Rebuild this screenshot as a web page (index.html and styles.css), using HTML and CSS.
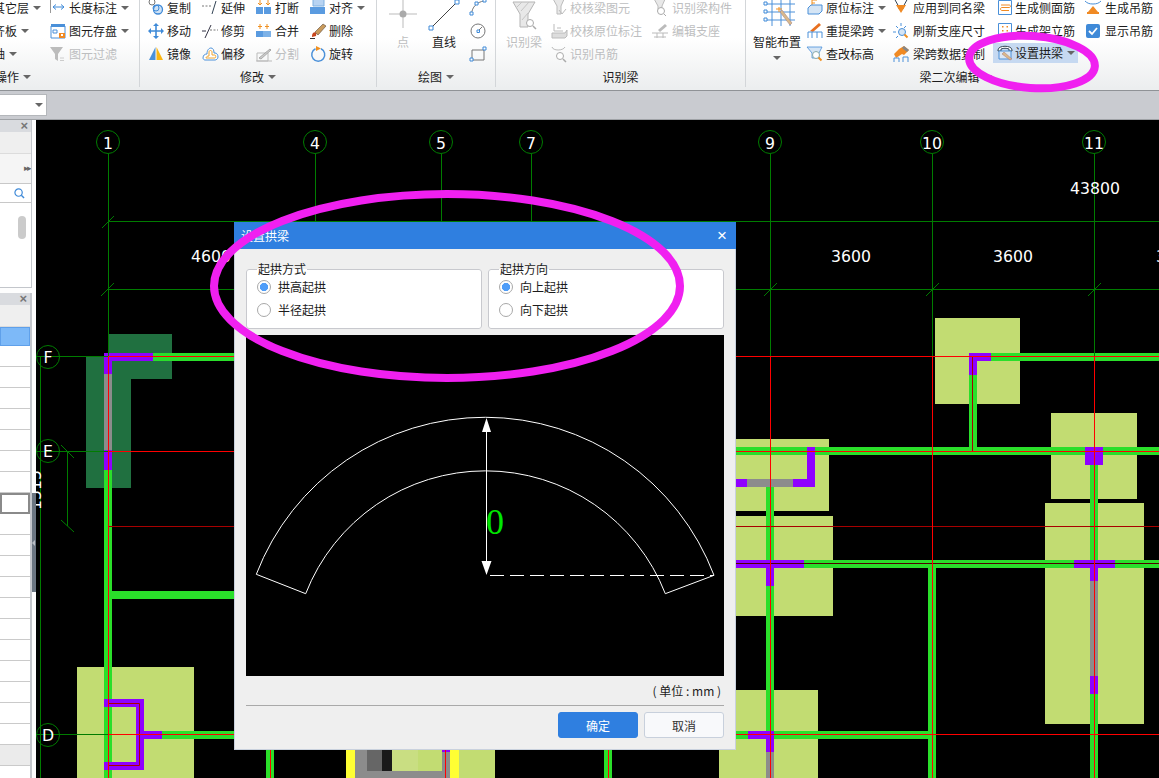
FILE: index.html
```html
<!DOCTYPE html>
<html lang="zh">
<head>
<meta charset="utf-8">
<title>设置拱梁</title>
<link rel="stylesheet" href="styles.css">
</head>
<body>
<div class="app">
  <header class="ribbon">
    <section class="group g1">
      <div class="tools">
        <div class="col col-a">
          <div class="tool pr9"><span>其它层</span><i class="caret"></i></div>
          <div class="tool pr21"><span>平齐板</span><i class="caret"></i></div>
          <div class="tool pr33"><span>轴</span><i class="caret"></i></div>
        </div>
        <div class="col">
          <div class="tool"><svg class="ico" viewBox="0 0 16 16"><path d="M.5 -2V13" stroke="#999" fill="none"/><path d="M3 7h11M3 7l3-2.500M3 7l3 2.500M14 7l-3-2.500M14 7l-3 2.500" stroke="#3f8ad8" fill="none"/></svg><span>长度标注</span><i class="caret"></i></div>
          <div class="tool"><svg class="ico" viewBox="0 0 16 16"><path d="M1 3h14v12H1z" fill="#fff" stroke="#4a90d9"/><path d="M1 1h14v3H1z" fill="#4a90d9"/><path d="M3 7h4v3H3z" fill="none" stroke="#4a90d9"/><path d="M9 10h6v5H9z" fill="#f08a24"/><path d="M11 11h2v2h-2z" fill="#fff"/></svg><span>图元存盘</span><i class="caret"></i></div>
          <div class="tool off"><svg class="ico" viewBox="0 0 16 16"><path d="M0 1h13L8 8v7L5 13V8z" fill="#bcbcbc"/><path d="M10 12h4M10 14.500h4" stroke="#ccc" fill="none"/></svg><span>图元过滤</span></div>
        </div>
      </div>
      <div class="label label-left"><span>操作</span><i class="caret"></i></div>
    </section>

    <section class="group g2">
      <div class="tools">
        <div class="col">
          <div class="tool"><svg class="ico" viewBox="0 0 16 16"><circle cx="4" cy="2" r="3" fill="#fff" stroke="#777"/><circle cx="10" cy="9.500" r="4.500" fill="#cfe2f5" stroke="#3f8ad8" stroke-width="1.300"/><circle cx="8" cy="8" r="3" fill="none" stroke="#3f8ad8"/></svg><span>复制</span></div>
          <div class="tool"><svg class="ico" viewBox="0 0 16 16"><path d="M8 2v12M2 8h12" stroke="#3f8ad8" stroke-width="1.600"/><path d="M8 0l3 3H5zM8 16l3-3H5zM0 8l3-3v6zM16 8l-3-3v6z" fill="#3f8ad8"/></svg><span>移动</span></div>
          <div class="tool"><svg class="ico" viewBox="0 0 16 16"><path d="M7.500 1L1 14h6.500z" fill="#4a90d9"/><path d="M8.500 1v13H15z" fill="#fbb512"/></svg><span>镜像</span></div>
        </div>
        <div class="col">
          <div class="tool"><svg class="ico" viewBox="0 0 16 16"><path d="M0 6h10" stroke="#777" stroke-dasharray="2 1.500" fill="none"/><path d="M14 1l-4 13" stroke="#345" fill="none"/></svg><span>延伸</span></div>
          <div class="tool"><svg class="ico" viewBox="0 0 16 16"><path d="M9 2L3 15" stroke="#334" fill="none"/><path d="M0 8h4" stroke="#334" fill="none"/><path d="M8 7h8" stroke="#777" stroke-dasharray="2 1.500" fill="none"/></svg><span>修剪</span></div>
          <div class="tool"><svg class="ico" viewBox="0 0 16 16"><path d="M1 12c0-3 2-4 4-4 0-4 2-6 4-6s3 2 3 5h1c2 0 3 2 3 4s-2 3-3 3H3c-1 0-2-1-2-2z" fill="#fff" stroke="#4a90d9"/><path d="M4 12c0-1 1-2 3-2V6c0-2 3-2 3 0v3h3c1 0 1 3 0 3z" fill="none" stroke="#f0a530"/></svg><span>偏移</span></div>
        </div>
        <div class="col">
          <div class="tool"><svg class="ico" viewBox="0 0 16 16"><path d="M0 7h7v7H0zM8 7h7v7H8z" fill="#5a9be0"/><path d="M4 0v5M2 3l2 2 2-2M12 0v5M10 3l2 2 2-2" stroke="#f09020" fill="none"/></svg><span>打断</span></div>
          <div class="tool"><svg class="ico" viewBox="0 0 16 16"><path d="M0 8h7v6H0z" fill="#5a9be0"/><path d="M7 8h8v6H7z" fill="#7db2e8"/><path d="M4 1v5M2 3.500h4M11 1v5M9 3.500h4" stroke="#f09020" fill="none"/></svg><span>合并</span></div>
          <div class="tool off"><svg class="ico" viewBox="0 0 16 16"><path d="M1 7h11v8H1z" fill="none" stroke="#bbb"/><path d="M3 12L14 3l1 1L5 13z" fill="#ccc" stroke="#aaa"/><path d="M0 15h16" stroke="#bbb"/></svg><span>分割</span></div>
        </div>
        <div class="col">
          <div class="tool"><svg class="ico" viewBox="0 0 16 16"><path d="M3 -2h11v8H3z" fill="#b7d3f2" stroke="#7fb0e0"/><path d="M0 7h15v7H0z" fill="#5a9be0"/></svg><span>对齐</span><i class="caret"></i></div>
          <div class="tool"><svg class="ico" viewBox="0 0 16 16"><path d="M5 9L13 1l3 2-8 9z" fill="#c99a5b" stroke="#5a4a3a" stroke-width=".6"/><path d="M3 10c2-2 4 0 3 3l-4 1c0-1 0-3 1-4z" fill="#c8461e"/><path d="M0 15.500h5" stroke="#333"/></svg><span>删除</span></div>
          <div class="tool"><svg class="ico" viewBox="0 0 16 16"><path d="M5.500 2.800A6.500 6.500 0 1 0 11 2.800" fill="none" stroke="#4a90d9" stroke-width="1.500"/><path d="M6 0l5 2.500L6 5z" fill="#f09020"/></svg><span>旋转</span></div>
        </div>
      </div>
      <div class="label"><span>修改</span><i class="caret"></i></div>
    </section>

    <section class="group g3">
      <div class="tools">
        <div class="big w30 off">
          <svg class="ico-big" viewBox="0 0 30 37"><path d="M15 2v30M1 18h28" stroke="#bbb" fill="none"/><circle cx="15" cy="18" r="3.500" fill="#aaa"/></svg>
          <span>点</span>
        </div>
        <div class="big w32">
          <svg class="ico-big" viewBox="0 0 32 37"><path d="M3 32L29 6" stroke="#444" fill="none"/><path d="M1 30h4v4H1zM27 4h4v4h-4z" fill="#fff" stroke="#3f8ad8"/></svg>
          <span>直线</span>
        </div>
        <div class="col">
          <div class="tool"><svg class="ico" viewBox="0 0 16 16"><path d="M1.500 14C2 7 7 2 14 1" stroke="#777" fill="none"/><path d="M0 12h3v3H0zM5 2h3v3H5zM13 -1h3v3h-3z" fill="#fff" stroke="#3f8ad8"/></svg></div>
          <div class="tool"><svg class="ico" viewBox="0 0 16 16"><circle cx="8" cy="8" r="7" fill="none" stroke="#777"/><path d="M7 7h2.500v2.500H7z" fill="#fff" stroke="#3f8ad8"/><path d="M9 7l3-3" stroke="#777"/></svg></div>
          <div class="tool"><svg class="ico" viewBox="0 0 16 16"><path d="M2 4h12v10H2z" fill="none" stroke="#777"/><path d="M0 12h3v3H0zM13 1h3v3h-3z" fill="#fff" stroke="#3f8ad8"/></svg></div>
        </div>
      </div>
      <div class="label"><span>绘图</span><i class="caret"></i></div>
    </section>

    <section class="group g4">
      <div class="tools">
        <div class="big w36 off">
          <svg class="ico-big" viewBox="0 0 36 37"><path d="M7 6h22l-7 12v13h-8V18z" fill="#e8e8e8" stroke="#b5b5b5"/><path d="M10 12l6-6M15 15l8-9M16 24l6-7" stroke="#c5c5c5" fill="none"/><circle cx="24" cy="27" r="3.500" fill="#fff" stroke="#aaa"/><path d="M27 30l3 3" stroke="#aaa" stroke-width="1.500"/></svg>
          <span>识别梁</span>
        </div>
        <div class="col">
          <div class="tool off"><svg class="ico" viewBox="0 0 16 16"><path d="M1 -3h13l-4 9v8H6V6z" fill="#e8e8e8" stroke="#bbb"/><path d="M8 10l3 4 4-5" stroke="#bbb" fill="none"/></svg><span>校核梁图元</span></div>
          <div class="tool off"><svg class="ico" viewBox="0 0 16 16"><path d="M3 1v7h9" stroke="#bbb" fill="none"/><path d="M1 10h13l2-3v6l-2 2H1z" fill="#ddd" stroke="#bbb"/><path d="M6 5h4" stroke="#bbb"/></svg><span>校核原位标注</span></div>
          <div class="tool off"><svg class="ico" viewBox="0 0 16 16"><path d="M1 1c1 4 11 4 13 0" stroke="#bbb" fill="none"/><circle cx="9" cy="10" r="3.500" fill="#fff" stroke="#aaa"/><path d="M12 13l3 3" stroke="#aaa" stroke-width="1.500"/></svg><span>识别吊筋</span></div>
        </div>
        <div class="col col-g4">
          <div class="tool off"><svg class="ico" viewBox="0 0 16 16"><path d="M1 -3h13l-4 9v6H6V6z" fill="#e8e8e8" stroke="#bbb"/><circle cx="9" cy="11" r="3.500" fill="#fff" stroke="#aaa"/><path d="M12 14l2 2" stroke="#aaa"/></svg><span>识别梁构件</span></div>
          <div class="tool off"><svg class="ico" viewBox="0 0 16 16"><path d="M6 7L13 1l2 2-7 6z" fill="#bbb"/><path d="M0 10h16M2 14h12M5 10v5M11 10v5" stroke="#bbb" fill="none"/></svg><span>编辑支座</span></div>
        </div>
      </div>
      <div class="label"><span>识别梁</span></div>
    </section>

    <section class="group g5">
      <div class="tools">
        <div class="big w48">
          <svg class="ico-big" viewBox="0 0 48 37"><path d="M17 8h28M17 16h28M17 24h28M22 2v28M31 2v28M40 2v28" stroke="#4a90d9" fill="none" transform="translate(-3 0)"/><path d="M11 6h3v3h-3zM11 14h3v3h-3zM11 22h3v3h-3z" fill="#fff" stroke="#3f8ad8"/><path d="M27 16l10 13 2-2-10-13z" fill="#d9b98a" stroke="#a88" stroke-width=".6"/><path d="M26 11v5M23 13h6" stroke="#f09020"/></svg>
          <span>智能布置</span>
          <i class="caret caret-big"></i>
        </div>
        <div class="col col-g5a">
          <div class="tool"><svg class="ico" viewBox="0 0 16 16"><path d="M5 -2v8M5 0h5M5 3h3" stroke="#f09020" fill="none"/><path d="M1 8l3-3h11v6l-3 3H1z" fill="#d5e5f5" stroke="#4a90d9"/></svg><span>原位标注</span><i class="caret"></i></div>
          <div class="tool"><svg class="ico" viewBox="0 0 16 16"><path d="M3 8L12 0l2 2-8 7z" fill="#e87020"/><path d="M1 15V9h14v6M5 9v6M10 9v6" stroke="#4a90d9" fill="none"/></svg><span>重提梁跨</span><i class="caret"></i></div>
          <div class="tool"><svg class="ico" viewBox="0 0 16 16"><path d="M0 1h15l-3 6v5H5V7z" fill="#d5e5f5" stroke="#4a90d9" stroke-width=".8"/><circle cx="9" cy="9" r="3.500" fill="#fff" stroke="#8aa"/><path d="M11.500 11.500l3 3" stroke="#f09020" stroke-width="2"/></svg><span>查改标高</span></div>
        </div>
        <div class="col col-g5b">
          <div class="tool"><svg class="ico" viewBox="0 0 16 16"><path d="M1 -2h14l-5 9v2H6V7z" fill="#fff" stroke="#345"/><path d="M3 5h10l-5 8z" fill="#f08a24"/></svg><span>应用到同名梁</span></div>
          <div class="tool"><svg class="ico" viewBox="0 0 16 16"><circle cx="9" cy="9" r="3.500" fill="#d5e5f5" stroke="#4a90d9"/><path d="M11.500 11.500l3 3" stroke="#f09020" stroke-width="2"/><path d="M8 0v3M3 3l2 2M13 3l-2 2M0 9h3M3 15l2-2" stroke="#4a90d9" fill="none"/></svg><span>刷新支座尺寸</span></div>
          <div class="tool"><svg class="ico" viewBox="0 0 16 16"><path d="M11 0l5 4-5 5-2-1-6 4-2-4 5-5z" fill="#f08a24"/><path d="M11 0l5 4-2 2-5-4z" fill="#888"/><path d="M1 16v-4h5v4M10 16v-5h5v5" stroke="#4a90d9" fill="none"/></svg><span>梁跨数据复制</span></div>
        </div>
        <div class="col col-g5c">
          <div class="tool"><svg class="ico" viewBox="0 0 16 16"><path d="M1.500 .500h13v14h-13z" fill="#fff" stroke="#4a90d9"/><path d="M4 5h8c2 0 2 2.500 0 2.500H5c-2 0-2 3 0 3h7" fill="none" stroke="#f08a24"/></svg><span>生成侧面筋</span></div>
          <div class="tool"><svg class="ico" viewBox="0 0 16 16"><path d="M1.500 .500h13v14h-13z" fill="#fff" stroke="#4a90d9"/><path d="M5 3h1.500v1.500H5zM9.500 3H11v1.500H9.500zM5 7h1.500v1.500H5zM9.500 7H11v1.500H9.500z" fill="#f08a24"/></svg><span>生成架立筋</span></div>
          <div class="tool hl"><svg class="ico" viewBox="0 0 16 16"><path d="M1 5c0-5 14-5 14 0v1h-3V4c-3-1-5-1-8 0v2H1z" fill="#fff" stroke="#345"/><path d="M2 6h12v8H2z" fill="#dce8f5" stroke="#4a90d9"/><path d="M5 9L13 15l2-1-8-7z" fill="#d9b98a" stroke="#a77" stroke-width=".5"/></svg><span>设置拱梁</span><i class="caret"></i></div>
        </div>
        <div class="col col-g5d">
          <div class="tool"><svg class="ico" viewBox="0 0 16 16"><path d="M0 1c2 2 4 3 8 3s6-1 8-3" stroke="#4a90d9" fill="none"/><path d="M3 12h10L8 6z" fill="#f08a24"/><path d="M2 13h12" stroke="#f08a24" stroke-width="2"/></svg><span>生成吊筋</span></div>
          <div class="tool"><svg class="ico" viewBox="0 0 16 16"><rect x="1" y="1" width="14" height="14" rx="2" fill="#3f8ad8"/><path d="M4 8l3 3 5-6" stroke="#fff" stroke-width="1.800" fill="none"/></svg><span>显示吊筋</span></div>
        </div>
      </div>
      <div class="label"><span>梁二次编辑</span><i class="caret"></i></div>
    </section>
  </header>

  <div class="strip">
    <div class="combo"><i class="caret"></i></div>
  </div>

  <main class="main">
    <aside class="side">
      <div class="panel panel-a">
        <div class="phead">×</div>
        <div class="prow-tool"></div>
        <div class="prow-tab">▸▸</div>
        <div class="prow-search"><svg class="search-ico" viewBox="0 0 12 12"><circle cx="5" cy="5" r="4" fill="none" stroke="#3f8ad8" stroke-width="1.300"/><path d="M8 8l3 3" stroke="#3f8ad8" stroke-width="1.500"/></svg></div>
        <div class="plist"><div class="thumb"></div></div>
      </div>
      <div class="panel panel-b">
        <div class="phead">×</div>
        <div class="prow-tool"></div>
        <div class="row row-sel"></div>
        <div class="row"></div><div class="row"></div><div class="row"></div><div class="row"></div><div class="row"></div><div class="row"></div><div class="row"></div>
        <div class="row row-box"></div>
        <div class="row"></div><div class="row"></div><div class="row"></div><div class="row"></div><div class="row"></div><div class="row"></div><div class="row"></div><div class="row"></div><div class="row"></div><div class="row"></div><div class="row"></div>
        <div class="row row-gray"></div>
      </div>
      <div class="handle"><i class="handle-arrow"></i></div>
    </aside>

    <svg class="canvas" viewBox="36 120 1123 658">
      <g class="col-fill">
        <rect x="77" y="667" width="117" height="111"/>
        <rect x="935" y="318" width="85" height="86"/>
        <rect x="1051" y="413" width="86" height="86"/>
        <rect x="1045" y="503" width="99" height="221"/>
        <rect x="700" y="439" width="129" height="72"/>
        <rect x="700" y="516" width="133" height="100"/>
        <rect x="719" y="690" width="99" height="88"/>
        <rect x="392" y="740" width="26" height="31" class="pale"/>
        <rect x="418" y="740" width="24" height="31"/>
        <rect x="459" y="740" width="36" height="38"/>
      </g>
      <path class="dark-col" d="M86 356h22v-22h64v45h-41v109H86z"/>
      <g class="yel">
        <rect x="346" y="740" width="9" height="38"/>
        <rect x="450" y="740" width="9" height="38"/>
      </g>
      <g class="gray">
        <rect x="355" y="740" width="12" height="38"/>
        <rect x="361" y="771" width="89" height="7"/>
        <rect x="442" y="740" width="8" height="38"/>
      </g>
      <rect x="367" y="740" width="15" height="31" class="gray-d"/>
      <rect x="382" y="740" width="10" height="31" class="gray-k"/>

      <g class="beam">
        <rect x="153" y="353" width="90" height="8"/>
        <rect x="104" y="470" width="8" height="308"/>
        <rect x="112" y="591" width="130" height="8"/>
        <rect x="162" y="731" width="80" height="8"/>
        <rect x="266" y="740" width="8" height="38"/>
        <rect x="604" y="740" width="8" height="38"/>
        <rect x="991" y="353" width="168" height="8"/>
        <rect x="969" y="375" width="8" height="76"/>
        <rect x="700" y="447" width="459" height="8"/>
        <rect x="766" y="483" width="8" height="269"/>
        <rect x="700" y="560" width="459" height="8"/>
        <rect x="700" y="731" width="236" height="8"/>
        <rect x="928" y="560" width="8" height="218"/>
        <rect x="1090" y="465" width="8" height="313"/>
      </g>
      <g class="gray">
        <rect x="104" y="374" width="8" height="77"/>
        <rect x="747" y="479" width="46" height="8"/>
        <rect x="1090" y="581" width="8" height="95"/>
        <rect x="766" y="752" width="8" height="26"/>
      </g>
      <g class="pur">
        <rect x="104" y="353" width="49" height="8"/>
        <rect x="104" y="353" width="8" height="21"/>
        <rect x="104" y="450" width="8" height="20"/>
        <path d="M104 699h40v32h18v8h-18v31h-40v-8h32v-55h-32z"/>
        <rect x="969" y="353" width="22" height="8"/>
        <rect x="969" y="353" width="8" height="22"/>
        <rect x="1085" y="447" width="18" height="18"/>
        <path d="M807 447h8v40h-22v-8h14z"/>
        <rect x="700" y="479" width="47" height="8"/>
        <rect x="700" y="560" width="104" height="8"/>
        <rect x="766" y="560" width="8" height="26"/>
        <rect x="1074" y="560" width="41" height="8"/>
        <rect x="1090" y="560" width="8" height="21"/>
        <rect x="1090" y="676" width="8" height="18"/>
        <rect x="748" y="731" width="26" height="8"/>
        <rect x="766" y="731" width="8" height="21"/>
        <rect x="442" y="750" width="8" height="2"/>
      </g>

      <g class="gl">
        <path d="M108.500 154V356M315.500 154V240M441.500 154V240M531.500 154V240M770.500 154V356M932.500 154V356M1094.500 154V356"/>
        <path d="M108 221.500H1159M108 289.500H1159"/>
        <path d="M102 228l12-12M101 296l13-13M764 296l13-13M926 296l13-13M1088 296l13-13"/>
        <path d="M40.500 357V778M36 356.500H108M36 451.500H108M36 734.500H108"/>
        <path d="M67.500 451V526M61 520l13 12M61 445l13 13"/>
        <circle cx="108" cy="142" r="11.500"/><circle cx="315" cy="142" r="11.500"/><circle cx="441" cy="142" r="11.500"/><circle cx="531" cy="142" r="11.500"/>
        <circle cx="770" cy="142" r="11.500"/><circle cx="932" cy="142" r="11.500"/><circle cx="1094" cy="142" r="11.500"/>
        <circle cx="48" cy="357" r="11.500"/><circle cx="48" cy="451" r="11.500"/><circle cx="48" cy="735" r="11.500"/>
      </g>
      <g class="dr">
        <path d="M108 526.500H1159M972.500 356V451"/>
        <path d="M108 703.500H139.500V765.500H108"/>
      </g>
      <path class="drk" d="M700 563.500H1159"/>
      <g class="rl">
        <path d="M108 356.500H1159M108 451.500H1159M108 734.500H1159"/>
        <path d="M108.500 356V778M270.500 740V778M445.500 740V778M608.500 740V778M770.500 356V778M932.500 356V778M1094.500 356V778"/>
      </g>
      <g class="cad-text">
        <text x="108" y="149" text-anchor="middle">1</text>
        <text x="315" y="149" text-anchor="middle">4</text>
        <text x="441" y="149" text-anchor="middle">5</text>
        <text x="531" y="149" text-anchor="middle">7</text>
        <text x="770" y="149" text-anchor="middle">9</text>
        <text x="932" y="149" text-anchor="middle">10</text>
        <text x="1094" y="149" text-anchor="middle">11</text>
        <text x="48" y="363" text-anchor="middle">F</text>
        <text x="48" y="457" text-anchor="middle">E</text>
        <text x="48" y="741" text-anchor="middle">D</text>
        <text x="1070" y="194">43800</text>
        <text x="191" y="262">4600</text>
        <text x="831" y="262">3600</text>
        <text x="993" y="262">3600</text>
        <text x="1156" y="262">3600</text>
        <text transform="translate(41 510) rotate(-90)">1515</text>
      </g>
    </svg>
  </main>

  <div class="dialog">
    <div class="dlg-head"><span>设置拱梁</span><span class="dlg-x">×</span></div>
    <div class="dlg-opts">
      <fieldset class="fs">
        <legend>起拱方式</legend>
        <label class="radio"><input type="radio" name="m" checked><span>拱高起拱</span></label>
        <label class="radio"><input type="radio" name="m"><span>半径起拱</span></label>
      </fieldset>
      <fieldset class="fs">
        <legend>起拱方向</legend>
        <label class="radio"><input type="radio" name="d" checked><span>向上起拱</span></label>
        <label class="radio"><input type="radio" name="d"><span>向下起拱</span></label>
      </fieldset>
    </div>
    <svg class="preview" viewBox="246 335 478 341">
      <path class="pv-line" d="M256.300 574.300A245 245 0 0 1 714 575.300L665.300 593.700A193 193 0 0 0 305.700 593.700Z"/>
      <path class="pv-line" d="M486.500 420V572"/>
      <path class="pv-dash" d="M490 575.500H714"/>
      <path class="pv-head" d="M486.500 418l4.500 14h-9zM486.500 575l-5-14h10z"/>
      <text class="pv-zero" x="495" y="534" text-anchor="middle">0</text>
    </svg>
    <div class="dlg-unit">( 单位 : mm )</div>
    <div class="dlg-foot">
      <button class="btn btn-ok" type="button">确定</button>
      <button class="btn" type="button">取消</button>
    </div>
  </div>

  <svg class="marks" viewBox="0 0 1159 778">
    <ellipse cx="447" cy="286" rx="233" ry="92"/>
    <ellipse cx="1032" cy="62" rx="63" ry="26" transform="rotate(4 1032 62)"/>
  </svg>
</div>
</body>
</html>
```
FILE: styles.css
```css
* { box-sizing: border-box; }
html, body { margin: 0; padding: 0; }
body {
  width: 1159px;
  height: 778px;
  overflow: hidden;
  background: #000;
  font-family: "Noto Sans CJK SC", "Liberation Sans", sans-serif;
  font-size: 12px;
  color: #1c1c1c;
}
.app {
  position: relative;
  width: 1159px;
  height: 778px;
  overflow: hidden;
  display: flex;
  flex-direction: column;
}

/* ribbon */
.ribbon {
  flex: none;
  display: flex;
  height: 91px;
  overflow: hidden;
  padding-bottom: 3px;
  background: linear-gradient(#fff 0, #fff 38px, #eceeef 88px);
  border-bottom: 1px solid #8f9296;
}
.group {
  display: flex;
  flex-direction: column;
  height: 87px;
  border-right: 1px solid #d3d6d9;
}
.g1 { width: 140px; }
.g2 { width: 237px; padding-left: 8px; }
.g3 { width: 119px; padding-left: 11px; }
.g4 { width: 250px; padding-left: 10px; }
.g5 { flex: 1; padding-left: 7px; border-right: 0; }
.tools {
  display: flex;
  gap: 11px;
  height: 69px;
  margin-top: -4px;
}
.g1 .tools { gap: 0; }
.g3 .tools { gap: 10px; }
.g4 .tools { gap: 9px; }
.g5 .tools { gap: 6px; }
.col { display: flex; flex-direction: column; flex: none; }
.col-a { width: 50px; }
.col-a .tool { justify-content: flex-end; }
.pr9 { padding-right: 9px; }
.pr21 { padding-right: 21px; }
.pr33 { padding-right: 33px; }
.col-g4 { margin-left: 1px; }
.col-g4 .tool, .col-g5b .tool, .col-g5d .tool { gap: 4px; }
.col-g5b { margin-left: 1px; }
.col-g5c { width: 85px; margin-left: 2px; padding-left: 4px; }
.col-g5c .tool { gap: 2px; }
.col-g5d { margin-left: 1px; }
.tool {
  display: flex;
  align-items: center;
  gap: 3px;
  height: 23px;
  white-space: nowrap;
}
.tool span, .big span, .label span { flex: none; line-height: 16px; }
.tool.hl {
  height: 20px;
  margin: 1px 0 2px -4px;
  padding-left: 4px;
  background: #c6d9f1;
}
.off { color: #bdbec0; }
.ico { flex: none; width: 16px; height: 16px; overflow: visible; }
.big {
  display: flex;
  flex-direction: column;
  align-items: center;
  flex: none;
  white-space: nowrap;
}
.w30 { width: 30px; }
.w32 { width: 32px; }
.w36 { width: 36px; }
.w48 { width: 48px; }
.ico-big { flex: none; height: 37px; width: 100%; overflow: visible; }
.big span { height: 18px; line-height: 18px; }
.caret {
  flex: none;
  display: block;
  width: 0;
  height: 0;
  margin-left: 4px;
  border-top: 4px solid #666;
  border-left: 4px solid transparent;
  border-right: 4px solid transparent;
}
.tool .caret { margin-left: 1px; }
.col-g5c .tool .caret { margin-left: 2px; }
.caret-big { margin: 5px 0 0; }
.label {
  display: flex;
  align-items: center;
  justify-content: center;
  height: 20px;
  margin-top: 2px;
  white-space: nowrap;
}
.label-left { justify-content: flex-start; margin-left: -5px; }
.g2 .label { margin-left: -8px; }
.g3 .label { margin-left: -11px; }
.g4 .label { margin-left: -10px; }
.g5 .label { margin-left: -1px; }

/* strip */
.strip {
  flex: none;
  height: 29px;
  padding-top: 3px;
  background: #c9cbd0;
  border-bottom: 1px solid #9fa2a6;
}
.combo {
  display: flex;
  align-items: center;
  justify-content: flex-end;
  width: 47px;
  height: 22px;
  padding-right: 3px;
  background: #fff;
  border: 1px solid #b4b7bb;
  border-left: 0;
}

/* main */
.main { flex: 1; display: flex; min-height: 0; }
.side {
  flex: none;
  width: 36px;
  display: flex;
  flex-direction: column;
  gap: 5px;
  background: #fdfdfd;
}
.panel { width: 32px; background: #fff; border-right: 1px solid #c3c6cb; overflow: hidden; }
.panel-a { flex: none; height: 168px; border-bottom: 1px solid #c3c6cb; }
.panel-b { flex: 1; border-right: 2px solid #c3c6cb; }
.phead {
  height: 12px;
  padding-right: 3px;
  background: #d9dbdf;
  color: #777;
  font-family: "Liberation Sans", sans-serif;
  font-size: 13px;
  font-weight: 700;
  line-height: 12px;
  text-align: right;
}
.prow-tool { height: 22px; background: #efefef; border-bottom: 1px solid #dcdcdc; }
.prow-tab {
  height: 30px;
  padding-right: 1px;
  background: #f5f5f5;
  border-bottom: 1px solid #c8c8c8;
  color: #666;
  font-size: 9px;
  letter-spacing: -2px;
  line-height: 28px;
  text-align: right;
}
.prow-search {
  display: flex;
  align-items: center;
  justify-content: flex-end;
  height: 19px;
  padding-right: 6px;
  border-bottom: 1px solid #c8c8c8;
}
.search-ico { width: 11px; height: 11px; }
.plist { padding: 13px 0 0 18px; }
.thumb { width: 8px; height: 23px; background: #cbcbcb; border-radius: 4px; }
.row { height: 21px; background: #fff; border-bottom: 1px solid #cacaca; }
.row-sel { height: 19px; background: #7db9f8; border: 1px solid #5fa0ea; }
.row-box { border: 2px solid #8a8a8a; }
.row-gray { background: #ebebeb; }
.handle {
  position: absolute;
  left: 32px;
  top: 493px;
  display: flex;
  align-items: center;
  width: 4px;
  height: 99px;
  background: #6b7682;
}
.handle-arrow {
  display: block;
  width: 0;
  height: 0;
  border-top: 3px solid transparent;
  border-bottom: 3px solid transparent;
  border-right: 3px solid #b9bec4;
}

/* canvas */
.canvas { flex: none; display: block; width: 1123px; height: 658px; background: #000; }
.col-fill { fill: #c2dc72; }
.col-fill .pale { fill: #c9de82; }
.dark-col { fill: #207040; }
.yel { fill: #ffff33; }
.gray { fill: #8c8c8c; }
.gray-d { fill: #666; }
.gray-k { fill: #1a1a1a; }
.beam { fill: #2adf2a; }
.pur { fill: #8f00ff; }
.gl { fill: none; stroke: #007c00; stroke-width: 1; }
.dr { fill: none; stroke: #a80000; stroke-width: 1; }
.drk { fill: none; stroke: #500000; stroke-width: 1; }
.rl { fill: none; stroke: #ff0000; stroke-width: 1; }
.cad-text {
  fill: #fff;
  font-family: "DejaVu Sans", sans-serif;
  font-size: 15.7px;
}

/* dialog */
.dialog {
  position: absolute;
  left: 234px;
  top: 222px;
  width: 502px;
  height: 528px;
  display: flex;
  flex-direction: column;
  background: #efefef;
  border: 1px solid #c9d1dd;
  border-top: 0;
}
.dlg-head {
  display: flex;
  align-items: center;
  justify-content: space-between;
  flex: none;
  height: 27px;
  margin: 0 -1px;
  padding: 0 9px 0 7px;
  background: #2f7fe0;
  color: #fff;
}
.dlg-x { font-family: "Liberation Sans", sans-serif; font-size: 17px; line-height: 1; }
.dlg-opts { display: flex; gap: 6px; margin: 13px 11px 0; flex: none; }
.fs {
  flex: 1;
  min-width: 0;
  margin: 0;
  padding: 0 10px 7px;
  background: #fff;
  border: 1px solid #c8c9ce;
  border-radius: 3px;
}
.fs legend { margin-bottom: -1px; padding: 0 1px; line-height: 14px; color: #1c1c1c; }
.radio { display: flex; align-items: center; gap: 7px; height: 23px; }
.radio input {
  appearance: none;
  width: 14px;
  height: 14px;
  margin: 0;
  flex: none;
  background: #fff;
  border: 1px solid #a8a8a8;
  border-radius: 50%;
}
.radio input:checked {
  background: radial-gradient(circle, #4f9df8 0, #4f9df8 3.8px, #fff 4.4px);
}
.preview { flex: none; display: block; width: 478px; height: 341px; margin: 6px 11px 0; background: #000; }
.pv-line { fill: none; stroke: #fff; stroke-width: 1; }
.pv-dash { fill: none; stroke: #fff; stroke-width: 1; stroke-dasharray: 14 6; }
.pv-head { fill: #fff; }
.pv-zero { fill: #00e600; font-family: "Liberation Serif", serif; font-size: 36px; }
.dlg-unit { flex: none; height: 29px; margin: 0 11px; padding-right: 3px; line-height: 30px; text-align: right; white-space: pre; }
.dlg-foot {
  flex: none;
  display: flex;
  justify-content: flex-end;
  gap: 6px;
  margin: 0 11px;
  padding-top: 6px;
  border-top: 1px solid #a9a9a9;
}
.btn {
  width: 80px;
  height: 26px;
  padding: 0;
  background: #f8f9fb;
  border: 1px solid #c8d0dc;
  border-radius: 3px;
  color: #333;
  font: inherit;
}
.btn-ok { background: #2f7fe0; border-color: #2f7fe0; color: #fff; }

/* hand-drawn markup on top of the screenshot */
.marks { position: absolute; left: 0; top: 0; width: 1159px; height: 778px; pointer-events: none; }
.marks ellipse { fill: none; stroke: #f020f0; stroke-width: 8; }
```
